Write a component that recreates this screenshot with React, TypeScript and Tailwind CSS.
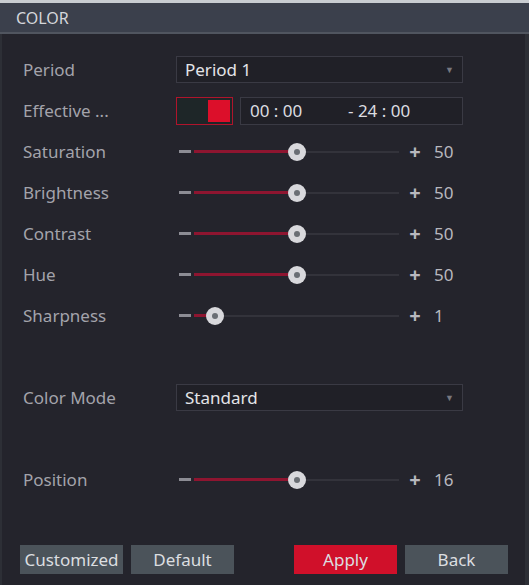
import React from 'react';

type SliderRow = { label: string; value: number; pct: number };

const sliders: SliderRow[] = [
  { label: 'Saturation', value: 50, pct: 50 },
  { label: 'Brightness', value: 50, pct: 50 },
  { label: 'Contrast', value: 50, pct: 50 },
  { label: 'Hue', value: 50, pct: 50 },
  { label: 'Sharpness', value: 1, pct: 10 },
];

const Label = ({ children }: { children: React.ReactNode }) => (
  <div className="w-[153px] shrink-0 text-[17px] text-[#a3a3ab]">{children}</div>
);

const Slider = ({ value, pct }: { value: number; pct: number }) => (
  <div className="flex items-center">
    <div className="ml-[3px] h-[3px] w-[12px] bg-[#8c8c94]" />
    <div className="relative ml-[3px] h-[2px] w-[205px] bg-[#33333b]">
      <div className="absolute left-0 top-[-0.5px] h-[3px] bg-[#8e1530]" style={{ width: `${pct}%` }} />
      <div
        className="absolute top-1/2 flex h-[18px] w-[18px] -translate-x-1/2 -translate-y-1/2 items-center justify-center rounded-full bg-[#d8d8dc]"
        style={{ left: `${pct}%` }}
      >
        <div className="h-[6px] w-[6px] rounded-full bg-[#6a6e74]" />
      </div>
    </div>
    <span className="ml-[9px] w-[14px] text-center text-[20px] font-bold leading-none text-[#b8b8be]">+</span>
    <span className="ml-[12px] text-[17px] text-[#b8b8be]">{value}</span>
  </div>
);

const Select = ({ text }: { text: string }) => (
  <div className="flex h-[27px] w-[287px] items-center justify-between border border-[#3a3a44] bg-[#202027] pl-[8px] pr-[8px]">
    <span className="text-[17px] text-[#e4e4e8]">{text}</span>
    <span className="text-[9px] text-[#77777f]">▼</span>
  </div>
);

export default function App() {
  return (
    <div
      className="flex h-[585px] w-[529px] flex-col overflow-hidden bg-[#24242c]"
      style={{ fontFamily: '"Noto Sans", "Open Sans", sans-serif' }}
    >
      <div className="h-[3px] shrink-0 bg-[#c9cdd1]" />
      <div className="flex h-[31px] shrink-0 items-center border-b-2 border-[#50555f] bg-[#3b404c] pl-[16px] text-[16px] text-[#d4d6da]">
        COLOR
      </div>

      <div className="flex flex-1 flex-col border-l-2 border-r-4 border-[#2d2f36] pl-[21px] pt-[15px]">
        <div className="flex h-[41px] items-center">
          <Label>Period</Label>
          <Select text="Period 1" />
        </div>

        <div className="flex h-[41px] items-center">
          <Label>Effective ...</Label>
          <div className="flex h-[28px] w-[57px] items-center justify-end border border-[#b0142c] bg-[#1e2628] pr-[2px]">
            <div className="h-[22px] w-[22px] bg-[#dc0f2a]" />
          </div>
          <div className="ml-[7px] flex h-[28px] w-[223px] items-center border border-[#3a3a44] bg-[#202027] pl-[9px] text-[17px] text-[#dcdce0]">
            <span className="w-[98px]">00 : 00</span>
            <span>- 24 : 00</span>
          </div>
        </div>

        {sliders.map((s) => (
          <div key={s.label} className="flex h-[41px] items-center">
            <Label>{s.label}</Label>
            <Slider value={s.value} pct={s.pct} />
          </div>
        ))}

        <div className="h-[41px]" />

        <div className="flex h-[41px] items-center">
          <Label>Color Mode</Label>
          <Select text="Standard" />
        </div>

        <div className="h-[41px]" />

        <div className="flex h-[41px] items-center">
          <Label>Position</Label>
          <Slider value={16} pct={50} />
        </div>

        <div className="mt-[45px] flex -ml-[3px] text-[17px] text-[#dcdee0]">
          <div className="flex h-[29px] w-[103px] items-center justify-center bg-[#4b535a]">Customized</div>
          <div className="ml-[8px] flex h-[29px] w-[103px] items-center justify-center bg-[#4b535a]">Default</div>
          <div className="ml-[60px] flex h-[29px] w-[103px] items-center justify-center bg-[#d0102a]">Apply</div>
          <div className="ml-[8px] flex h-[29px] w-[103px] items-center justify-center bg-[#4b535a]">Back</div>
        </div>
      </div>
    </div>
  );
}
